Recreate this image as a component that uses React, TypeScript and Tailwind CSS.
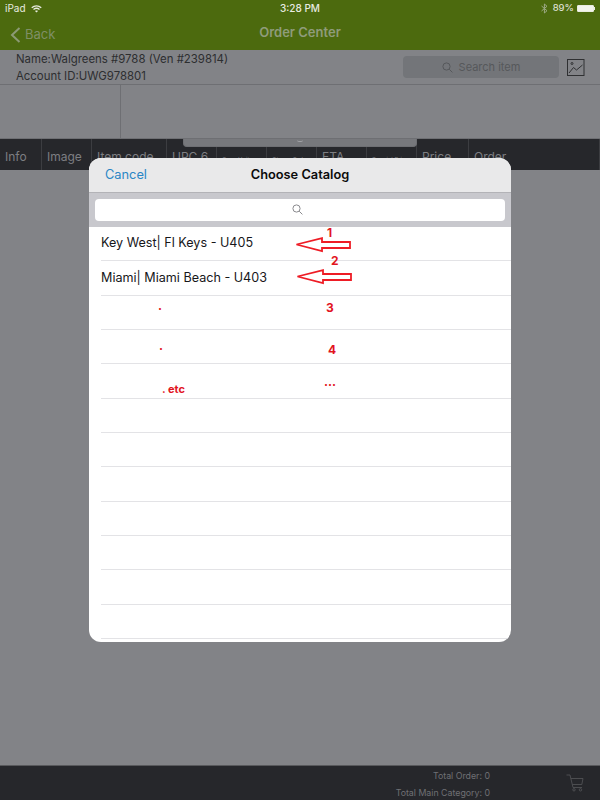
import React from "react";

const font = { fontFamily: "Inter, 'Liberation Sans', sans-serif" };

function Arrow() {
  return (
    <svg width="56" height="16" viewBox="0 0 56 16" fill="none">
      <path d="M1.5 7.5 L27 1.2 V5 H55 V11 H27 V14.2 Z" fill="#fff" stroke="#ee1c25" strokeWidth="1.8" />
    </svg>
  );
}

const cols: [string, number, string][] = [
  ["Info", 42, "text-[12px] pt-[9px]"],
  ["Image", 50, "text-[12px] pt-[9px]"],
  ["Item code", 75, "text-[12px] pt-[9px]"],
  ["UPC 6", 50, "text-[12px] pt-[9px]"],
  ["Case Unit", 50, "text-[6px] pt-[16px]"],
  ["Qty on Order", 50, "text-[6px] pt-[16px]"],
  ["ETA", 50, "text-[12px] pt-[9px]"],
  ["Special Price", 50, "text-[6px] pt-[16px]"],
  ["Price", 52, "text-[12px] pt-[9px]"],
  ["Order", 131, "text-[12px] pt-[9px]"],
];

const rows = [
  "Key West| Fl Keys - U405",
  "Miami| Miami Beach - U403",
  "",
  "",
  "",
  "",
  "",
  "",
  "",
  "",
  "",
  "",
];

export default function App() {
  return (
    <div className="relative w-[600px] h-[800px] overflow-hidden flex flex-col bg-[#828387]" style={font}>
      {/* Green bar */}
      <div className="h-[50px] bg-[#4c6a0e] flex flex-col shrink-0">
        <div className="h-[17px] px-[5px] flex items-center justify-between text-[10px] text-[#e8ebe0]">
          <div className="flex items-center gap-[5px] w-[150px]">
            <span>iPad</span>
            <svg width="11" height="8" viewBox="0 0 22 16" fill="none" stroke="#e8ebe0" strokeWidth="2.6">
              <path d="M1.5 5.5 C7 0.5 15 0.5 20.5 5.5" />
              <path d="M5 9 C8.5 6 13.5 6 17 9" />
              <path d="M11 15 L8 11.8 C9.8 10.6 12.2 10.6 14 11.8 Z" fill="#e8ebe0" stroke="none" />
            </svg>
          </div>
          <span className="font-medium">3:28 PM</span>
          <div className="flex items-center justify-end gap-[3px] w-[150px]">
            <svg className="mr-[2px]" width="7" height="11" viewBox="0 0 7 11" fill="none" stroke="#9eab87" strokeWidth="1">
              <path d="M0.5 3 L6 7.7 L3.4 10 V1 L6 3.3 L0.5 8" />
            </svg>
            <span className="text-[9.6px]">89%</span>
            <div className="flex items-center">
              <div className="w-[17px] h-[7px] border border-[#e8ebe0] bg-[#f2f4ec] rounded-[1px]" />
              <div className="w-[1px] h-[3px] bg-[#e8ebe0]" />
            </div>
          </div>
        </div>
        <div className="relative flex-1 flex items-center justify-center pb-[1px]">
          <div className="absolute left-[10px] top-[8px] flex items-center gap-[4px] text-[#8c9a75]">
            <svg width="11" height="16" viewBox="0 0 11 16" fill="none" stroke="#8c9a75" strokeWidth="2">
              <path d="M9.5 1 L2 8 L9.5 15" />
            </svg>
            <span className="text-[13px] text-[#7f8f66]">Back</span>
          </div>
          <span className="text-[13px] font-semibold text-[#8f9c7a]">Order Center</span>
        </div>
      </div>

      {/* Customer info */}
      <div className="h-[35px] shrink-0 flex items-center justify-between border-b border-[#6e6f73] pl-[16px] pr-[15px]">
        <div className="text-[11.4px] leading-[17px] text-[#2d2e30] mt-[1px]">
          <div>Name:Walgreens #9788 (Ven #239814)</div>
          <div>Account ID:UWG978801</div>
        </div>
        <div className="flex items-center gap-[8px]">
          <div className="w-[156px] h-[22px] rounded-[4px] bg-[#737579] flex items-center justify-center gap-[6px] text-[11px] text-[#56585b]">
            <svg width="11" height="11" viewBox="0 0 11 11" fill="none" stroke="#56585b" strokeWidth="1">
              <circle cx="4.5" cy="4.5" r="3.6" />
              <path d="M7.2 7.2 L10.4 10.4" />
            </svg>
            <span>Search item</span>
          </div>
          <svg width="18" height="17" viewBox="0 0 18 17" fill="none" stroke="#2f3032" strokeWidth="1">
            <rect x="0.5" y="0.5" width="16.5" height="16" />
            <circle cx="5" cy="4.5" r="1" />
            <path d="M2 14 L6.5 8.5 L9.5 11 L15.5 6" />
          </svg>
        </div>
      </div>

      {/* Filter band */}
      <div className="h-[54px] shrink-0 flex border-b border-[#6e6f73]">
        <div className="w-[121px] border-r border-[#6e6f73]" />
      </div>

      {/* Table header */}
      <div className="relative h-[31px] shrink-0 bg-[#26272b] flex text-[#7d7e82] mb-[1px]">
        {cols.map(([label, width, size]) => (
          <div key={label} style={{ width }} className={`shrink-0 pl-[5px] whitespace-nowrap overflow-hidden border-r border-[#3c3d41] last:border-r-0 ${size}`}>
            {label}
          </div>
        ))}
        <div className="absolute left-[183px] top-0 w-[234px] h-[8px] bg-[#77787c] border border-[#6e6f73] border-t-0 rounded-b-[4px] flex justify-center">
          <div className="w-[6px] h-[2px] mt-[1px] rounded-b-[3px] border-b border-[#a0a1a4]" />
        </div>
      </div>

      <div className="flex-1" />

      {/* Footer */}
      <div className="h-[35px] shrink-0 bg-[#26272b] border-t border-[#58595c] flex justify-end items-center pr-[16px] gap-[76px]">
        <div className="text-right text-[8.8px] leading-[17px] text-[#6f7074] mt-[1px]">
          <div>Total Order: 0</div>
          <div>Total Main Category: 0</div>
        </div>
        <svg width="18" height="18" viewBox="0 0 18 18" fill="none" stroke="#505155" strokeWidth="0.9">
          <path d="M0.5 1 H4 L7 13.5 H16" />
          <path d="M4.8 4.5 H17 L15.8 10.5 H6.3" />
          <circle cx="8" cy="15.8" r="1.2" />
          <circle cx="14.5" cy="15.8" r="1.2" />
        </svg>
      </div>

      {/* Modal */}
      <div className="absolute left-[89px] top-[158px] w-[422px] h-[484px] rounded-[12px] overflow-hidden bg-white flex flex-col">
        <div className="relative h-[35px] shrink-0 bg-[#e9e9ea] border-b border-[#b3b3b7] flex items-center justify-center">
          <span className="absolute left-[16px] text-[12.8px] text-[#2a86c5]">Cancel</span>
          <span className="text-[12.8px] font-semibold text-[#0c0c0c]">Choose Catalog</span>
        </div>
        <div className="h-[34px] shrink-0 bg-[#c8c8cd] flex items-center px-[6px] pb-[1px]">
          <div className="w-full h-[22px] bg-white rounded-[4px] flex items-center justify-center pr-[6px]">
            <svg width="11" height="11" viewBox="0 0 11 11" fill="none" stroke="#8a8a8e" strokeWidth="1">
              <circle cx="4.5" cy="4.5" r="3.6" />
              <path d="M7.2 7.2 L10.4 10.4" />
            </svg>
          </div>
        </div>
        <div className="flex-1 overflow-hidden pl-[12px]">
          {rows.map((t, i) => (
            <div key={i} className="h-[34.35px] border-b border-[#e3e3e6] flex items-center text-[12.6px] text-[#17171a]">
              {t}
            </div>
          ))}
        </div>
      </div>

      {/* Red annotations */}
      <div className="absolute left-[295px] top-[237px]"><Arrow /></div>
      <div className="absolute left-[296px] top-[269px]"><Arrow /></div>
      {[
        ["1", 327, 225, "text-[12px]"],
        ["2", 331, 253, "text-[12px]"],
        ["3", 326, 300, "text-[12px]"],
        ["4", 328, 342, "text-[12px]"],
        ["...", 324, 374, "text-[12px]"],
        [".", 158, 298, "text-[12px]"],
        [".", 159, 338, "text-[12px]"],
        [". etc", 162, 382, "text-[11px]"],
      ].map(([t, x, y, size]) => (
        <span
          key={`${t}${x}${y}`}
          style={{ left: x as number, top: y as number }}
          className={`absolute leading-[15px] font-bold text-[#e2141e] ${size}`}
        >
          {t}
        </span>
      ))}
    </div>
  );
}
